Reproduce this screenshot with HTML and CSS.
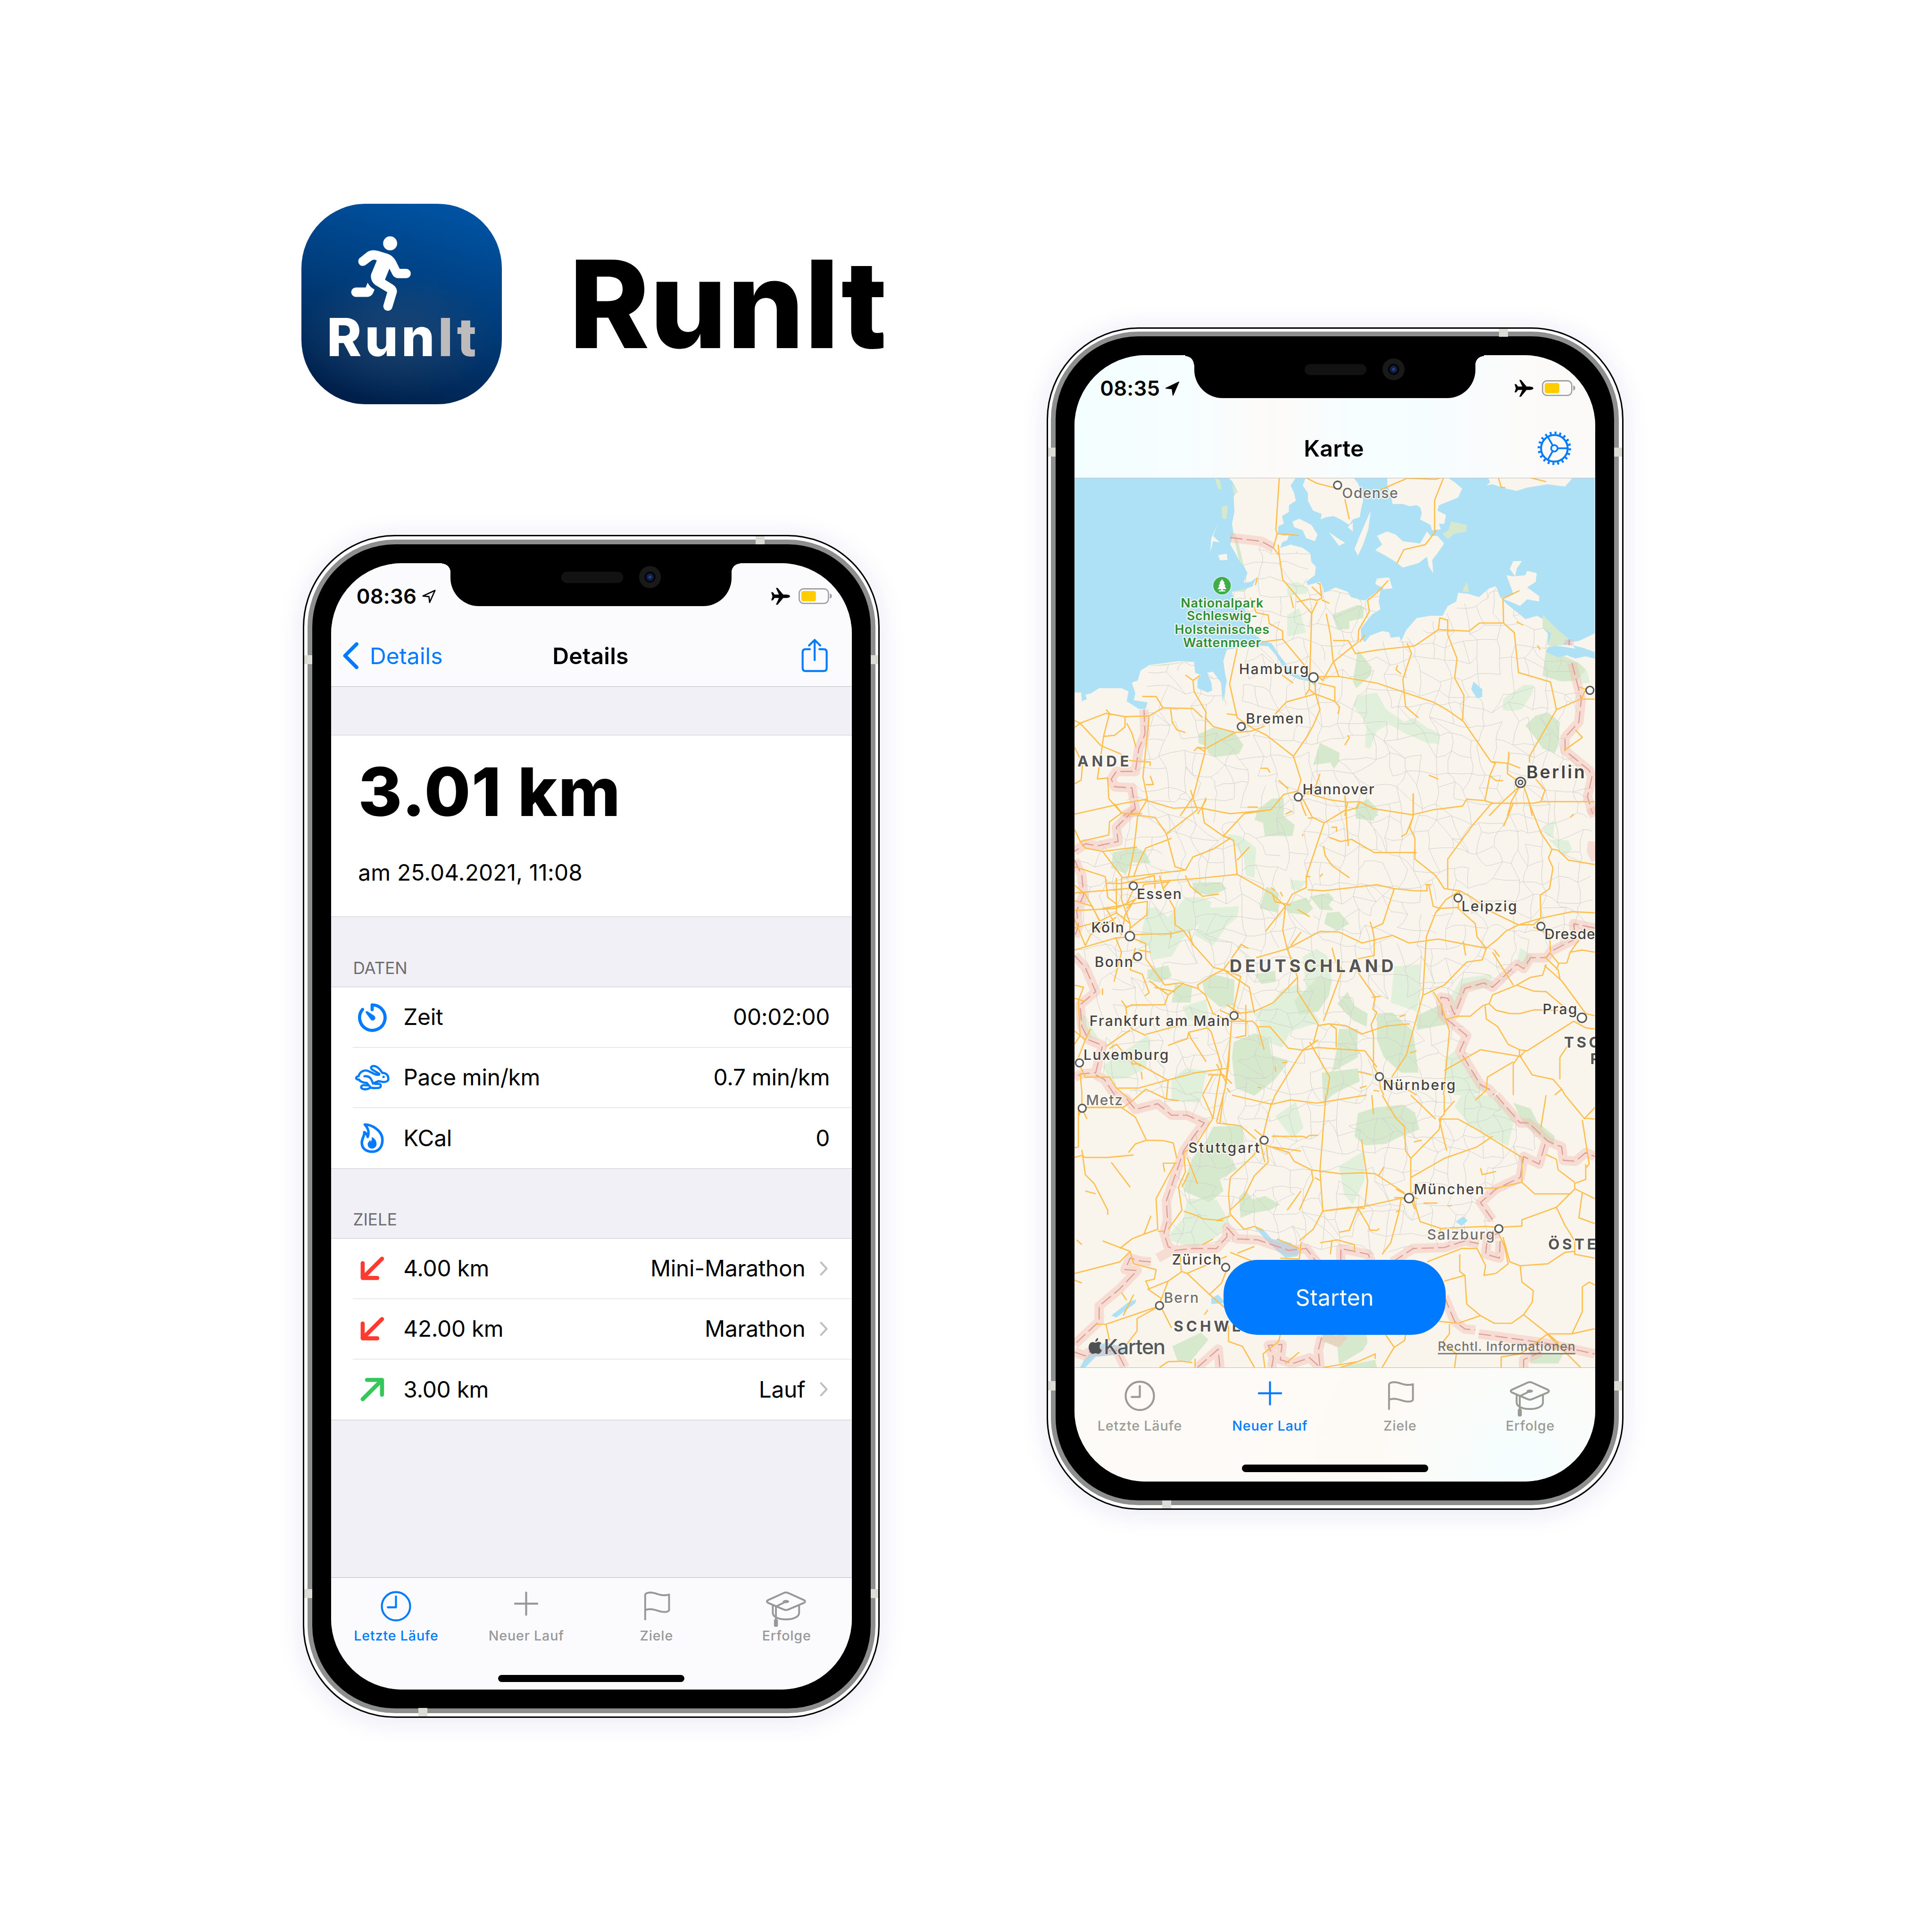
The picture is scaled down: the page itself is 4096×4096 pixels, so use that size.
FILE: index.html
```html
<!DOCTYPE html>
<html lang="de">
<head>
<meta charset="utf-8">
<title>RunIt</title>
<link rel="stylesheet" href="styles.css">
</head>
<body>
<svg width="0" height="0" class="defs">
  <symbol id="i-clock" viewBox="0 0 100 90"><g class="ln"><circle cx="50" cy="40" r="33"/><path d="M50 17V42.500H31"/></g></symbol>
  <symbol id="i-plus" viewBox="0 0 100 90"><path class="ln" d="M50 8V60M24 34H76"/></symbol>
  <symbol id="i-flag" viewBox="0 0 100 90"><path class="ln3" transform="translate(-19 -20) scale(.33333)" d="M129 272V98Q135 85 165 84C205 86 225 103 262 103Q285 102 296 98V208Q290 220 262 220C225 220 205 201 165 200Q140 201 130 207"/></symbol>
  <symbol id="i-hat" viewBox="0 0 100 90"><g transform="translate(-322 -20) scale(.33333)"><path class="ln3" d="M1095 88Q1112 80 1130 88L1240 138Q1252 147 1240 155L1130 202Q1112 211 1095 202L985 155Q972 147 985 138ZM1020 172V225C1020 255 1060 272 1112 272S1204 255 1204 225V172M1112 147L1042 182V275"/><ellipse class="fl" cx="1112" cy="147" rx="22" ry="11"/><rect class="fl" x="1028" y="270" width="28" height="54" rx="11"/></g></symbol>
  <symbol id="i-plane" viewBox="0 0 44 40"><path class="fl" d="M44 20Q43 23.500 36 24H28L15 39.500H11L18 24H8L4 29.500H0L3 20L0 10.500H4L8 16H18L11 .5H15L28 16H36Q43 16.500 44 20Z"/></symbol>
  <symbol id="i-battery" viewBox="0 0 78 38"><rect x="1.500" y="1.500" width="68" height="34" rx="10" fill="none" stroke="#9b9b9d" stroke-width="2.800"/><rect x="6.500" y="6.500" width="34" height="24" rx="5" fill="#ffcc00"/><path d="M73 12.500Q77.500 14 77.500 18.500T73 24.500Z" fill="#9b9b9d"/></symbol>
  <symbol id="i-down" viewBox="0 0 90 90"><path class="ln9" d="M68 22.500L23 67.500M23 33V67.500H57"/></symbol>
  <symbol id="i-up" viewBox="0 0 90 90"><path class="ln9" d="M23 67.500L68 22.500M33 22.500H68V57"/></symbol>
  <symbol id="i-next" viewBox="0 0 20 36"><path class="ln" d="M3 4L16 18L3 32"/></symbol>
</svg>

<main class="board">
  <section class="col">
    <header class="brand">
      <svg class="app-icon" viewBox="0 0 466 466">
        <g transform="translate(78 46) scale(.33333)" fill="#fff">
          <circle cx="386" cy="138.500" r="49"/>
          <path d="M303 192L370 212Q405 225 425 260L453 317H498A32.500 32.500 0 0 1 498 382H440Q413 380 401 355L381 315L350 393L408 429Q437 450 433 482L401 587Q393 610 369 610Q338 606 338 575L366 480L283 430Q245 400 253 355L293 258Q270 245 252 262L215 290Q200 300 180 294Q155 275 168 247Q172 241 180 236L222 202Q255 178 303 192Z"/>
          <path d="M229 413Q245 445 277 461L267 486Q254 511 228 513H147A33 33 0 0 1 147 447H215Z"/>
        </g>
        <svg width="404" height="466"><text x="59" y="355" class="icon-name" textLength="350">Run<tspan fill="#bdbbbc">It</tspan></text></svg>
      </svg>
      <h1>RunIt</h1>
    </header>

    <div class="phone">
      <i class="band tr"></i><i class="band lt"></i><i class="band rt"></i><i class="band lb"></i><i class="band rb"></i><i class="band bl"></i>
      <div class="rim"><div class="screen">
        <div class="bars">
          <div class="status"><span class="time">08:36</span>
            <svg class="loc" viewBox="0 0 34 34"><path fill="none" stroke="#000" stroke-width="3" stroke-linejoin="round" d="M31 3L3 16L17 17.500L18.500 31Z"/></svg>
            <svg class="plane"><use href="#i-plane"/></svg><svg class="battery"><use href="#i-battery"/></svg></div>
          <div class="nav">
            <a class="back"><svg viewBox="0 0 38 64"><path fill="none" stroke="currentColor" stroke-width="8.500" stroke-linecap="round" stroke-linejoin="round" d="M33 5L6 32L33 59"/></svg>Details</a>
            <b>Details</b>
            <svg class="share" viewBox="0 0 64 80"><path class="ln" d="M21 24.500H11Q4 24.500 4 31.500V68Q4 75.500 11 75.500H53Q60 75.500 60 68V31.500Q60 24.500 53 24.500H43M32 50V4M19 16L32 3L45 16"/></svg>
          </div>
        </div>
        <div class="content">
          <div class="hero"><strong>3.01 km</strong><p>am 25.04.2021, 11:08</p></div>
          <h2>DATEN</h2>
          <ul>
            <li><svg class="blue" viewBox="66 71 270 270"><path fill="none" stroke="currentColor" stroke-width="22" stroke-linecap="round" stroke-linejoin="round" d="M201 155V122A89 89 0 1 1 134 154"/><path class="fl" d="M157 178Q152 163 168 167L214 196Q229 208 220 223Q206 238 192 226Z"/></svg><span>Zeit</span><em>00:02:00</em></li>
            <li><svg class="blue" viewBox="66 493 270 270"><path fill="none" stroke="currentColor" stroke-width="15" stroke-linecap="round" stroke-linejoin="round" d="M272 597C255 570 232 547 208 549C190 552 190 565 200 573L250 603Q255 612 238 611C215 608 190 588 165 581C135 577 112 595 107 620C92 622 85 632 92 639C98 646 105 643 108 643C118 660 145 668 163 667L192 701C215 706 235 703 250 702C266 696 265 676 250 674H222L243 655C260 655 270 662 285 661C305 660 315 652 314 635C313 610 295 598 272 597M147 621C183 616 195 635 207 672L232 660M165 685C140 680 125 683 124 697C126 714 160 714 175 708Q186 703 190 698"/><circle class="fl" cx="281" cy="625" r="8.500"/></svg><span>Pace min/km</span><em>0.7 min/km</em></li>
            <li><svg class="blue" viewBox="66 917 270 270"><path fill="none" stroke="currentColor" stroke-width="18" stroke-linejoin="round" d="M150 957C200 957 273 1000 273 1065C273 1120 240 1147 200 1147C155 1147 129 1120 129 1085C129 1050 148 1040 147 1010Q165 1022 170 1043C182 1010 175 985 150 957Z"/><path class="fl" d="M185 1065Q192 1070 193 1078Q200 1065 199 1044C220 1055 232 1070 232 1092C232 1112 218 1125 201 1125C183 1125 170 1112 170 1095C170 1082 180 1078 185 1065Z"/></svg><span>KCal</span><em>0</em></li>
          </ul>
          <h2>ZIELE</h2>
          <ul class="goals">
            <li><svg class="red"><use href="#i-down"/></svg><span>4.00 km</span><em>Mini-Marathon</em><svg class="next"><use href="#i-next"/></svg></li>
            <li><svg class="red"><use href="#i-down"/></svg><span>42.00 km</span><em>Marathon</em><svg class="next"><use href="#i-next"/></svg></li>
            <li><svg class="green"><use href="#i-up"/></svg><span>3.00 km</span><em>Lauf</em><svg class="next"><use href="#i-next"/></svg></li>
          </ul>
        </div>
        <div class="tabs">
          <nav><a class="on"><svg><use href="#i-clock"/></svg>Letzte Läufe</a><a><svg><use href="#i-plus"/></svg>Neuer Lauf</a><a><svg><use href="#i-flag"/></svg>Ziele</a><a><svg><use href="#i-hat"/></svg>Erfolge</a></nav>
          <div class="home"></div>
        </div>
        <div class="notch"><i class="speaker"></i><i class="camera"></i></div>
      </div></div>
    </div>
  </section>

  <section class="col second">
    <div class="phone">
      <i class="band tr"></i><i class="band lt"></i><i class="band rt"></i><i class="band lb"></i><i class="band rb"></i><i class="band bl"></i>
      <div class="rim"><div class="screen map-screen">
        <div class="bars">
          <div class="status"><span class="time">08:35</span>
            <svg class="loc" viewBox="0 0 34 34"><path stroke="#000" stroke-width="2" stroke-linejoin="round" d="M32 2L2 16.500L16.500 18L18.500 33Z"/></svg>
            <svg class="plane"><use href="#i-plane"/></svg><svg class="battery"><use href="#i-battery"/></svg></div>
          <div class="nav"><span></span><b>Karte</b>
            <svg class="gear" viewBox="-40 -40 80 80"><circle r="36" fill="none" stroke="currentColor" stroke-width="6" stroke-dasharray="4.600 6.710"/><circle r="31" fill="none" stroke="currentColor" stroke-width="4.500"/><circle r="7.500" fill="none" stroke="currentColor" stroke-width="4"/><path fill="none" stroke="currentColor" stroke-width="4" d="M8 0H30M-4 -7L-15.500 -27M-4 7L-15.500 27"/></svg></div>
        </div>
        <div class="content map">
<svg viewBox="2503 1114 1212 2070" preserveAspectRatio="none">
<clipPath id="de"><path d="M2906 1253L2966 1276 3055 1289 3042 1355 3110 1370 3179 1398 3211 1345 3215 1416 3179 1495 3263 1493 3360 1434 3484 1365 3557 1330 3585 1391 3605 1475 3661 1544 3683 1628 3645 1733 3709 1809V2156L3613 2215 3476 2299 3388 2324 3416 2411 3448 2526 3561 2615 3605 2657 3549 2693 3541 2742 3448 2800 3491 2858 3492 2930 3444 2896 3292 2907 3067 2938 2930 2887 2721 2903 2717 2796 2757 2680 2805 2615 2697 2569 2572 2513 2552 2309 2503 2225V2003L2600 1926 2637 1835 2665 1653 2677 1549 2781 1541 2858 1585 2882 1508 2870 1378Z"/></clipPath>

<g transform="translate(2480 1100) scale(.80357 .5102)">
<path class="g2" d="M645 510L675 500 705 530 700 555 645 560ZM645 650L680 620 690 680 700 730 645 750ZM850 1020L905 1005 930 1080 985 1140 1010 1120 1050 1165 1085 1190V1240L1050 1235 985 1190 940 1150 905 1180 885 1260 870 1255 875 1150 835 1060ZM1270 1035L1330 970H1360L1355 1010 1325 1080 1300 1090 1270 1085ZM1490 880L1515 910 1522 960 1495 965Z"/>
<path class="g1" d="M775 650L850 605 868 615 865 665 825 680V715L790 717ZM850 810L890 890 888 925 845 985 835 955ZM388 1195L430 1165 490 1180 518 1245 505 1285 435 1300 415 1280 410 1250 388 1235ZM740 1235L797 1280 795 1320 780 1355 770 1325 720 1335ZM1335 1155L1365 1110 1400 1095 1435 1140 1430 1250 1420 1282 1385 1260 1365 1215ZM1395 805L1450 840 1490 870 1510 900 1485 950 1440 955 1385 930ZM555 1545L600 1490 635 1485V1568H555ZM845 1515L880 1490 910 1568H845Z"/>
</g>
<g transform="translate(2480 1850) scale(.80357 .5102)">
<path class="g2" d="M470 180L510 190 555 245 550 380 525 370 520 290ZM240 520L265 515 300 560 350 470 400 470 425 490 420 540 370 620 340 660 310 740 255 755 240 690 215 680ZM400 520L505 510 500 560 470 600 430 690 375 640 400 560ZM655 390L700 395 680 440 655 430ZM690 740L730 705 760 735 775 850 700 890ZM630 890L675 865 740 1040 655 1080 630 1155 570 1120 565 1030 548 1005 600 950ZM955 785L1030 775V900L1020 990 945 950ZM340 970L410 935 420 1040 360 1030ZM110 1240L240 1100 250 1120 235 1250 180 1295 130 1300ZM310 1300L350 1250 410 1260 395 1400 310 1390ZM1100 1210L1130 1170 1225 1350 1180 1372H1130L1110 1330ZM1115 930L1150 840 1235 820 1245 880 1165 890 1130 990ZM1320 700L1360 740 1340 790 1310 770ZM1385 155L1420 115 1415 200 1400 190ZM1402 205L1460 210 1470 250 1450 280ZM40 1000L60 1010 100 1120 60 1110Z"/>
<path class="g1" d="M565 60L600 30 630 20 635 100 667 140 660 190H580L575 130 550 115ZM843 55L880 25 910 70 895 120 843 110ZM140 265L205 240 235 265 250 315 195 310 178 362 135 335ZM370 403L450 400 470 430 430 460 375 450ZM585 420L620 450 618 540 565 520ZM710 465L765 450 780 475 765 505 780 530 740 525ZM760 540L795 535 825 590 790 622 752 590ZM240 800L300 780 310 830 275 860 240 840ZM550 820L610 805 612 855 570 865ZM400 860L430 820 492 845 490 960 450 970 405 910ZM320 865L370 875 365 950 310 950ZM700 890L735 830 775 845 765 920 735 990 680 1005 665 940ZM790 955L820 900 840 965 878 1000 875 1060 835 1030ZM795 1070H850L848 1140 850 1200 775 1265 790 1150ZM905 1000L950 995 1010 1080 1025 1270H975L925 1200 905 1120ZM1020 1010L1095 955 1105 1050 1020 1075ZM490 1130L550 1090 590 1110 600 1190 650 1215 610 1300 550 1375 495 1340 485 1200ZM745 1270L850 1250 855 1310 800 1350 775 1372 750 1410ZM640 500L700 470 720 520 700 550 650 540Z"/>
</g>
<g transform="translate(2480 2550) scale(.80357 .44643)">
<path class="g2" d="M355 540L440 545 465 620 475 660 440 740 380 800 310 760 305 720 345 640ZM795 370L865 295 870 440 835 570 810 520ZM610 110L670 35 692 170 660 225 645 190ZM1150 0H1245L1305 110 1285 265 1180 170 1130 60ZM310 0H395L390 40 310 30Z"/>
<path class="g1" d="M430 165L515 160 520 240 480 330 500 385 450 440 460 500 420 560 345 500 350 430 370 330 410 240ZM850 95L900 65 980 50 1015 90 1028 180 975 215 930 255 870 262 840 215ZM505 530L525 497 545 545 580 525 625 570 595 600 545 615 510 640ZM1300 40L1350 70 1370 140 1420 215 1415 265 1330 150ZM312 1310L395 1238 417 1275 365 1388 327 1385ZM745 1250L875 1248 878 1290 865 1330 795 1405 790 1310 745 1285ZM1350 1340L1445 1350 1430 1400H1350ZM790 1420L900 1380 905 1420Z"/>
</g>

<path id="minor" class="minor" clip-path="url(#de)"/>

<g transform="translate(2480 1100) scale(.80357 .5102)">
<path class="water" d="M29 20H470L485 40 500 85 490 110 492 180 485 235 490 280 480 330 495 370 505 400 520 430 530 460 518 505 540 500 555 480 545 520 520 535 485 545 490 575 520 600 525 640 530 690 550 740 575 770 600 780 620 830 640 870 655 905 690 935 710 940 730 960 728 980 712 955 680 945 650 925 630 880 610 830 590 795 560 790 510 800 470 810 460 860 465 920 470 950 458 1050 453 960 430 910 413 915 425 960 428 995 415 1005 385 985V945L395 925 378 915 375 865 330 862 245 880 220 905 212 950 195 960 205 1010 200 1040 240 1050 235 1080 215 1080 180 1045 185 1000 165 985 100 985 75 1010 60 1015 65 1035 50 1045 48 1005H29ZM672 20L655 60 665 95 670 130 650 150V180L630 200 635 235 620 245 618 275 635 290 650 285 645 310 630 320 625 345 655 330 690 345 712 370 715 410 728 430 725 470 700 500 705 515 740 500 750 530 752 550 785 525 820 545 830 570 870 585 905 545 925 530 900 510 905 485 940 480 950 530 915 535 910 590 915 625 890 650 870 690 858 715 860 760 870 775 885 745 920 725 940 730 945 755 970 750 975 770 990 720 1020 665 1060 655 1095 655 1110 610 1135 590 1140 550 1170 555 1200 570 1230 530 1250 520 1262 570 1280 600 1300 625 1320 650 1335 670 1370 655 1395 680 1385 710 1400 735V790L1440 795 1480 805 1465 775 1490 770 1536 735V20ZM1400 800L1430 790 1460 785 1500 800 1536 820V850L1510 840 1480 850 1455 835 1430 845 1395 820ZM1185 955L1210 990V1025L1195 1032 1178 990Z"/>
<path class="land" d="M700 20L690 60 705 95V130L720 175 745 190 742 215 757 205 780 200 800 215 825 240 835 215 855 205 860 160 865 130 860 90 850 50 835 20ZM935 20V60L945 100 950 145 980 145 1000 155 1020 150 1030 160 1035 185 1030 215 1060 240 1065 265 1090 260 1085 235 1100 235 1105 195 1080 175 1085 150 1140 115 1152 75 1130 45 1105 20ZM1225 20L1233 45 1222 60 1240 55 1280 75 1310 85 1340 70 1400 55 1450 65 1475 20ZM905 290L935 270 960 285 980 315 1030 325 1050 270 1060 290 1080 290 1100 325 1080 370 1065 400 1068 460 1055 430 1050 385 1025 415 980 435 960 410 935 385 900 355 920 330ZM887 175L880 260 865 330 850 380 840 350 855 290ZM660 225L680 212 715 240 733 285 725 315 700 300 690 265 665 250ZM765 272L800 310 813 322 795 335ZM820 250L835 230V270ZM1280 470L1300 475 1335 470 1340 450 1368 460 1365 500 1340 525 1375 565V590L1340 580 1320 610 1290 590 1265 575 1300 555 1290 510ZM1290 440L1300 405 1325 405 1310 440 1305 475ZM445 230L430 290 450 320 430 315 422 365 425 300ZM445 378L470 372 472 400 450 402Z"/>
<path class="g1" d="M1095 280L1112 265 1120 225 1165 240V270L1130 280 1110 305ZM455 155L473 155 468 215 457 210ZM485 55L503 90 490 100ZM435 27L450 35 455 80 445 75ZM1152 545L1165 500 1172 545ZM1385 650L1430 720 1460 760 1440 790 1400 790 1410 735 1385 710ZM240 885L290 875 375 862 290 882ZM485 260L500 300 520 430 505 400ZM485 545L530 530 520 545Z"/>
<path class="glow" d="M480 298L570 315 605 345M1462 763V790M230 1083L233 1195 215 1260 205 1365H150L135 1400 145 1435 195 1440 205 1535 170 1568M1470 870L1497 1035 1490 1140 1450 1210V1270L1520 1360 1528 1390 1515 1480 1530 1560"/>
<path class="dash" d="M480 298L570 315 605 345M1462 763V790M230 1083L233 1195 215 1260 205 1365H150L135 1400 145 1435 195 1440 205 1535 170 1568M1470 870L1497 1035 1490 1140 1450 1210V1270L1520 1360 1528 1390 1515 1480 1530 1560"/>
<path class="road" d="M622 25L612 262 616 280 605 345 622 380 632 490 716 645 732 590M619 330L622 380M616 280L678 288M700 25L730 50 800 78M812 122L825 215M915 80L993 27 1075 32 1090 25M1098 25L1072 128V262L1076 267 1045 330 983 353 963 415M1257 25L1265 68 1277 70M1350 25L1395 43M716 645L709 990 725 1012M672 592L712 578 732 584 745 575 740 510 732 506M745 582L767 598M716 522L745 565M558 480L553 515M538 573L555 640 590 652 593 690 632 725V762L570 775M632 762L695 880M655 565L663 620M758 645L770 740 778 860 795 932M938 493L905 550 878 585 883 635 852 720 850 775 778 866 748 950 735 932H795L905 962 1070 1050 1112 1088 1155 1136 1200 1240 1235 1320 1285 1328 1320 1350M870 742L855 775M778 768H822L843 828 905 811 1015 792 1083 718 1172 725 1202 688H1272M1083 718L1087 664 1110 675V740L1137 850 1130 938 1157 1018 1153 1136M1318 540L1270 577 1272 688 1303 732 1315 914 1408 957 1425 1083 1347 1296V1325M992 780L1005 825 980 945 988 1070 1025 1120M1310 682L1328 697M1370 790L1378 810M965 880L960 900 975 920M725 1012L643 1048 610 1103M709 990L697 1018M725 950L727 1010 740 1083 722 1150 705 1200 663 1296 685 1405 675 1455 690 1530 700 1568M727 1012L783 1045 797 1073 792 1103M735 962L783 980V1045M630 925L662 962M500 805L478 965 500 1120 547 1170 585 1200 663 1296M470 1102L498 1108M350 925L372 950 392 928M372 950L375 1000 410 1095 408 1120 430 1160 495 1187 540 1182 580 1158M408 1120L407 1275 373 1480 335 1568M495 1187L410 1260 385 1255 375 1272M407 1275L385 1255M225 1023H265L285 1075 372 1078 400 1120M285 1075L245 1112 175 1115 120 1100 45 1145 29 1133M307 1080L312 1140 325 1175 350 1188M120 1083L130 1100 113 1205 95 1400 125 1395 128 1490M175 1115V1162L145 1200 115 1205M45 1145L105 1247 165 1287M180 1145L195 1190 207 1255M45 1145L29 1165M29 1255L52 1330 48 1405 29 1422M245 1112L227 1390 240 1490 230 1494 165 1512 29 1560M185 1315L235 1322H248V1340M248 1385L257 1425H235M128 1490L165 1555 225 1558M230 1494L315 1533 380 1528 480 1558 598 1540 635 1470 675 1455M365 1450L375 1500M410 1495L385 1560M690 1460L770 1495 820 1505 855 1503 895 1535 1007 1563 1068 1540 1153 1523 1165 1492 1218 1498 1240 1510H1360L1380 1503H1536M740 1375L728 1430 690 1480M568 1351H588L595 1370M620 1405L648 1445M530 1528H560M1055 1382L1083 1400M1010 1465V1568M855 1503L848 1530 815 1545M820 1505L812 1568M820 1200L825 1210 812 1245M1235 1320L1248 1328 1232 1385 1218 1498M1285 1328L1287 1275M1283 1330V1375L1310 1405M1320 1430L1295 1500 1283 1568M1320 1430L1265 1510 1230 1568M1330 1430L1345 1500 1355 1568M1232 1385L1250 1407H1270M1365 1400L1392 1450 1380 1503M1425 1083L1495 1035H1536M1490 980L1510 990 1497 1035M1480 1175L1500 1210 1447 1270"/>
</g>

<g transform="translate(2480 1850) scale(.80357 .5102)">
<path class="glow" d="M205 65L150 150 155 215 95 235 60 225 29 260M29 300L50 370 55 460 35 530 40 600 29 650M29 735L60 790 90 900 45 960 50 1060 70 1120 110 1145 90 1270 50 1275 29 1290M90 1280L115 1300 145 1372M1536 610L1475 590 1480 660 1410 715 1395 745 1350 745 1330 795 1310 775 1240 880 1215 860 1160 885 1130 1005 1110 930 1090 925 1095 1010 1165 1100 1145 1170 1205 1325 1230 1345 1245 1372M1525 60L1536 100M1530 215L1527 260 1540 300"/>
<path class="dash" d="M205 65L150 150 155 215 95 235 60 225 29 260M29 300L50 370 55 460 35 530 40 600 29 650M29 735L60 790 90 900 45 960 50 1060 70 1120 110 1145 90 1270 50 1275 29 1290M90 1280L115 1300 145 1372M1536 610L1475 590 1480 660 1410 715 1395 745 1350 745 1330 795 1310 775 1240 880 1215 860 1160 885 1130 1005 1110 930 1090 925 1095 1010 1165 1100 1145 1170 1205 1325 1230 1345 1245 1372"/>
<path class="road" d="M145 42L165 85 130 125 128 185 45 215 29 160M45 215L60 245 110 260M520 88L598 70M165 85L262 105 295 180 320 330 350 345 372 285 430 250 480 200 460 190M520 88L460 190M375 30L385 70 295 180M410 15L398 60 405 130 460 190 490 210 500 365 602 455 640 510 582 625M535 240L500 300M240 22L212 95 200 260 185 375M110 260L210 240M110 260L168 380M310 200L235 245 215 310 200 375M168 380L350 345M120 405L165 407 260 370 262 430M29 450L190 428M29 330L118 375 125 470 150 500M190 405L375 385 500 365M350 370L365 420 400 465 447 455M150 380V500L150 540 190 590M165 380V480L190 590M200 430L180 500M240 488L110 520M29 530L150 520 215 470 230 410 300 400M29 415L60 455 110 600M29 485L80 510 100 575M275 370L285 430 305 395M190 590L188 650 235 680 235 750 290 870M190 640L310 635 345 622 375 690 432 790 460 800M345 622L320 595 318 520 285 430M360 622L372 690M308 625V655M188 650L148 655 29 710M148 655L165 720 143 855M120 520L135 560 165 640 175 550 195 500M205 480L180 520M240 488L238 550 190 610M29 610L100 580 150 540M60 690L75 640 150 560M29 570L60 690M205 700L190 800 225 820 245 905 232 920M215 710L250 720M290 870L335 860 385 885 408 915 430 1000 480 1035M245 850L300 915 290 960H195L175 975M300 915L345 860M260 880L320 900M165 940L178 970 180 1030 195 1070 235 1100M460 800L535 880 550 1000M460 800L428 825 385 870 388 885M460 800L512 685 533 703M555 745L645 705 740 625 795 628 862 678 950 643 998 678 1083 660 1222 702 1210 755 1165 765 1100 870 1040 915M645 705L675 835V900L735 1050 720 1140M675 835L605 950 550 990 500 1000M460 800L510 830 485 1015 480 1120 465 1340 440 1495M480 1035L545 1035 560 1060H595L648 1158 690 1167 732 1155 870 1170M450 985L530 1040M495 1110L525 1100V960M470 960L510 1000M765 1047L735 1055M690 1167L735 1120M765 1047L815 1055 862 1093 930 1057 1000 1047M770 1050L787 1070V1155M775 700L785 760 805 800 750 1035M845 800L900 925 893 980 905 995 888 1050 895 1100V1240L912 1290M890 925L915 922M870 1170L905 1245M710 1130L768 1290 760 1372M690 1167L610 1372M560 1060L578 1165M470 1340L480 1360M895 1350L912 1355M912 1290L915 1340 925 1372M912 1290L985 1340 1020 1372M948 1290L990 1190 1038 915 1048 650 1075 540 1088 520 1145 515M850 1265L890 1280M855 1340L875 1330M1068 900L1090 955 1115 1080 1105 1250 1098 1372M1190 1395L1222 1350 1225 1290 1300 1220M1145 440L1105 480 1075 540M1055 410L1068 510 1088 520M1045 412H1063M705 435L750 440 905 412 955 430 1015 440H1050V412M640 510L660 455 700 425V375H712M675 525L710 558M740 375L748 362M598 425L610 440M625 445L632 465M602 455L610 490 655 505M700 400V375L752 130 718 105 690 20M705 108H718M752 130L815 70 812 0M640 90L660 75M773 150H788V170M690 180V190M765 195L800 215 832 205 897 265H1020M1010 0V100L1000 150 1015 200V295L1075 370 1100 430 1145 440 1140 520 1190 590 1195 650 1222 702M1010 100L990 180 975 193M750 235L755 280 775 325 825 380M640 510L632 620 645 705M655 690L685 628M885 580L893 620 897 660V735L850 750M955 430L922 590 890 612M815 70L822 235M1110 430V295L1180 145 1240 35M1300 40L1272 145M1345 35L1380 175 1412 250 1402 290 1415 335 1405 430 1378 460 1380 565 1315 595 1240 538 1180 470 1145 440M1412 250L1430 255 1460 300 1536 320M1380 565L1470 535 1536 540M1315 595H1358L1380 565M1358 605L1405 640 1408 720M1315 595L1278 625 1255 660 1222 702M1465 720L1500 710 1536 720M1390 740L1430 800 1435 840M1425 800L1432 770H1455L1465 720 1490 665M1405 720L1430 770M1390 780L1440 850 1510 1000 1536 1010M1395 775L1385 825 1350 835 1310 870 1240 915 1230 955 1250 985 1290 1000 1320 1000 1360 983 1430 985M1310 870L1360 898 1395 900 1470 1000M1230 955L1218 960 1222 1025 1255 1060 1285 1140 1318 1165 1340 1170 1475 1035 1510 1065 1536 1070M1300 870L1240 720M1110 1025L1135 1012H1175L1215 960M1318 1165V1190L1300 1230V1372M1335 1170L1320 1195M1325 1197L1205 1165 1100 1260M1318 1190L1355 1280 1415 1300 1440 1345 1450 1372M1435 1300V1200L1465 1130M1440 1345L1420 1372M1155 670L1162 735M1245 710L1260 740M1465 105L1475 90M29 930L60 945M29 870L55 880 40 940 45 1100 29 1140M110 885V915M40 1200L60 1120 29 1080M75 1070L60 1120M45 1240L60 1290 130 1290 150 1340 195 1400 170 1428H50M45 1270L50 1360V1428M150 1340H215L295 1305 380 1270 470 1250M195 1210V1230L215 1230 300 1305 295 1390 330 1397M222 1265L225 1300M480 1110L475 1240 465 1340M415 1065L425 1085 455 1240 440 1372M415 1280H460L485 1320M295 1390L235 1345 195 1400M300 1145L355 1115 360 1085 415 1065M360 1085L365 1110 410 1220M430 1280L400 1370M440 1230L470 1320M130 1160L150 1140 175 1185 220 1240M120 1150L190 1075M235 1095L330 1055M610 1240L612 1265M630 1225L645 1222M1000 1180L1020 1170M970 1015L988 1005M560 1335L570 1340"/>
</g>

<g transform="translate(2480 2550) scale(.80357 .44643)">
<path class="water" d="M552 690L575 700 600 750 655 770 680 810 675 840 640 848 615 810 580 750ZM1133 660L1155 632 1168 655 1150 682ZM55 1385L90 1310 120 1290 180 1320 175 1350 90 1365 60 1420H45ZM135 1150L185 1080 207 1065 205 1085 150 1160ZM425 1060L445 1040 460 1070V1085L425 1090Z"/>
<path class="glow" d="M140 0L180 20 205 75 270 45 310 105H355L405 145 380 200 345 290 320 420 295 550 298 650 288 720 300 790 320 810 370 800 440 800 470 740V690L500 750 560 755 650 810 700 800 730 870M310 810L270 850M250 870L220 865 190 850 175 910 210 915 160 1010 100 1100V1180L29 1300M800 870V800L880 830 890 880M950 870L1010 800 1100 795 1160 760 1200 775M1258 720L1225 740 1220 830 1260 850 1262 760M1240 650L1205 560 1250 490 1320 430 1330 320 1375 360 1395 240M1250 0L1320 145H1345L1400 240 1440 270 1445 340 1480 345 1510 300 1536 320M1100 1050L1130 1180 1160 1220 1190 1225M1200 1245L1400 1295 1536 1350M1330 1420V1380L1380 1340M385 1420L445 1325 450 1420M600 1420L605 1370 590 1305 630 1300 625 1380 660 1400 710 1370 740 1420 735 1330 745 1260M750 1250L790 1290 810 1250M29 1340L60 1360 70 1340 150 1330 175 1420"/>
<path class="dash" d="M180 20L205 75 270 45 310 105H355L405 145 380 200 345 290 320 420 295 550 298 650 288 720 300 790 320 810 370 800 440 800 470 740V690L500 750 560 755 650 810 700 800 730 870M250 870L220 865 190 850 175 910 210 915 160 1010 100 1100V1180L29 1300M800 870V800L880 830 890 880M950 870L1010 800 1100 795 1160 760 1200 775M1258 720L1225 740 1220 830 1260 850 1262 760M1240 650L1205 560 1250 490 1320 430 1330 320 1375 360 1395 240M1250 0L1320 145H1345L1400 240 1440 270 1445 340 1480 345 1510 300 1536 320M1100 1050L1130 1180 1160 1220 1190 1225M1200 1245L1400 1295 1536 1350M1330 1420V1380L1380 1340M385 1420L445 1325 450 1420M600 1420L605 1370 590 1305 630 1300 625 1380 660 1400 710 1370 740 1420 735 1330 745 1260M29 1340L60 1360 70 1340 150 1330 175 1420"/>
<path class="road" d="M40 60V270L29 275M50 70L65 125M50 70L40 110M29 325L50 315 60 325 125 325 200 312M50 285L60 415 85 460 125 600V625M50 65H165L205 115 237 235 285 237 315 250 325 330M237 235L205 255 185 300M135 350L190 480M60 500L90 515M440 0L430 120 380 260 345 300 350 400 330 480 340 600 300 700M460 0L450 150M400 0L430 120M485 0L600 48 655 25 730 42 875 0M440 145L510 160 555 230M355 325L380 440 385 465M360 405L340 480M285 355H325M285 355L290 400M320 355L265 540 270 700 230 725 195 750 160 800M250 630L230 725M560 260L550 310 480 430 475 520 480 620 520 700M585 270L590 350 550 420 520 530 480 600M565 230L580 350M580 260L650 300 665 345 715 390 800 410 860 405 900 410 985 510M600 270L685 292M600 215H690L700 222 710 210 735 210M550 180L575 215M715 390L720 440 680 600M600 40L590 100 575 215M610 0L600 48M740 390L757 0M725 430L740 445M740 390L748 605 720 700 680 760M748 605L825 585 870 590M748 605L870 580 970 540 1003 540M870 580L878 450 860 230M850 590L825 705 795 715M850 590L880 680 885 705H905L912 695M890 0L895 100M920 0L960 120 985 165 988 290 1003 330V510M1003 330L1085 180 1090 125H1140L1195 180 1325 325V455L1250 485H1215M1020 490L1003 520M1003 430L1100 330 1195 270 1240 215M1003 0L1075 125M1100 0V100L1085 125 1107 290M1130 30L1100 90M1205 380L1210 415 1250 398M925 375L910 420M1012 245L1035 235M960 490L1000 530 1025 540M1010 540L1030 660 1090 695 1220 685 1258 690 1325 683V650L1425 585 1478 490V460L1510 440V360M975 540L970 600 945 770 920 830M970 600L960 610M1003 540L1015 595M955 535H985M1040 563H1080M1110 577H1122M1325 455L1362 515H1465L1478 490M1425 585L1450 680 1478 760M1090 695L1080 750M1255 710L1275 790 1285 880 1250 930 1215 940 1220 890 1195 800H1150L1050 870M1270 740L1290 870 1320 890 1400 880 1450 820 1478 815M1320 890L1325 975 1358 1020 1355 1080 1330 1145 1295 1190H1245L1205 1150M1330 1145L1400 1245H1470L1500 1130 1500 1000 1520 975 1536 990M1145 830V920L1160 940 1165 1090 1205 1150 1140 1190 1085 1180M1470 1245L1536 1218M1400 1245L1430 1290 1420 1330M1265 1365V1420M1265 1365L1320 1350 1400 1245M1400 1250L1495 1420M1100 970L1160 940M1480 490L1536 540M1500 510L1490 640 1536 670M1395 310L1425 335 1430 390 1478 455M1395 0L1380 170M1450 0L1505 120 1536 125M1500 130L1520 360 1510 380M1505 125L1536 65M1478 750V830L1536 850M29 930L160 870 190 815 200 880 265 910 260 960 235 970 245 1010 300 970 340 920 355 930 470 840M240 1010L280 1060 275 1090M300 970L275 1090 310 1215M275 1100L210 1165V1230L180 1300M90 1195H120L275 1100M120 1195L130 1280M165 1030L180 1070M200 1040L170 1150M355 930L420 1040 465 1110M455 980L420 1040M470 910L455 980M335 830L338 920M480 820L550 870M500 825L550 790M415 1120L405 1145M475 1200V1285L515 1310 550 1420M275 1420L300 1390 340 1388 370 1395M378 1375V1420M625 1250L620 1285 575 1350 580 1420M680 1340L640 1400M750 1420L850 1390 900 1350V1375M850 1390L800 1420M930 1250L955 1315 920 1420M955 1315L985 1280 990 1230M1115 1195V1245L1095 1290 1135 1350 1130 1420M740 770L790 755 840 780V810M775 755L770 830M625 850L680 855M680 855L685 770M550 685L520 700M550 685L575 705M645 600L685 500M615 750L680 800M29 965L50 980M35 755L50 780M110 760L190 815M400 645L460 655M345 605L385 630 400 645M270 710H288M430 750L400 780M440 655L480 630"/>
</g>

<g class="dots">
<circle cx="3115.600" cy="1130" r="9"/><circle cx="3059.400" cy="1577.600" r="10.500"/><circle cx="2891.400" cy="1692" r="9"/><circle cx="3024" cy="1856" r="9"/><circle cx="3541.500" cy="1822" r="11.500"/><circle cx="3541.500" cy="1822" r="5"/><circle cx="3703" cy="1607.600" r="9"/><circle cx="2640" cy="2063" r="9"/><circle cx="3396" cy="2091" r="9"/><circle cx="2632" cy="2180" r="10.500"/><circle cx="2650" cy="2227.600" r="9"/><circle cx="3589" cy="2157" r="9"/><circle cx="3684.500" cy="2370" r="10.500"/><circle cx="2874.500" cy="2365" r="9"/><circle cx="2514.600" cy="2475" r="9"/><circle cx="2521" cy="2580.600" r="9"/><circle cx="3213" cy="2507" r="9"/><circle cx="2944.500" cy="2655" r="9"/><circle cx="3282" cy="2790" r="10.500"/><circle cx="3491" cy="2861" r="9"/><circle cx="2855" cy="2951" r="9"/><circle cx="2701" cy="3040" r="9"/>
</g>
<g class="city">
<text x="3126" y="1160" textLength="130" class="dim">Odense</text><text x="2886" y="1570" textLength="162">Hamburg</text><text x="2902" y="1685" textLength="134">Bremen</text><text x="3034" y="1850" textLength="167">Hannover</text><text x="3555" y="1812" textLength="136" class="capital">Berlin</text><text x="2648" y="2094" textLength="104">Essen</text><text x="3404" y="2122" textLength="129">Leipzig</text><text x="2542" y="2172" textLength="76">Köln</text><text x="2550" y="2252" textLength="89">Bonn</text><text x="3597" y="2187" textLength="139">Dresden</text><text x="3593" y="2361" textLength="80">Prag</text><text x="2538" y="2389" textLength="326">Frankfurt am Main</text><text x="2524" y="2468" textLength="198">Luxemburg</text><text x="2530" y="2573.500" textLength="85" class="dim">Metz</text><text x="3221" y="2538" textLength="169">Nürnberg</text><text x="2768" y="2684" textLength="166">Stuttgart</text><text x="3293" y="2781" textLength="163">München</text><text x="3324" y="2886" textLength="157" class="dim">Salzburg</text><text x="2730" y="2945" textLength="115">Zürich</text><text x="2711" y="3033" textLength="81" class="dim">Bern</text>
</g>
<g class="country">
<text x="2510" y="1785" textLength="120">ANDE</text><text x="2864" y="2264" textLength="382" class="big">DEUTSCHLAND</text><text x="3643" y="2439" letter-spacing="6">TSCHECHISCHE</text><text x="3704" y="2478" letter-spacing="6">REP.</text><text x="3606" y="2909" letter-spacing="6">ÖSTERREICH</text><text x="2734" y="3100" letter-spacing="6.500">SCHWEIZ</text>
</g>
<circle cx="2846.500" cy="1364" r="22" fill="#fff" opacity=".6"/><circle cx="2846.500" cy="1364" r="20.500" fill="#3fae49"/>
<path fill="#fff" d="M2846.500 1349L2853 1358H2850.500L2855 1365H2852L2857 1372H2848.500V1375H2854V1377.500H2839V1375H2844.500V1372H2836L2841 1365H2838L2842.500 1358H2840Z"/>
<g class="park"><text x="2846.500" y="1415" textLength="192">Nationalpark</text><text x="2846.500" y="1445" textLength="164">Schleswig-</text><text x="2846.500" y="1476.500" textLength="220">Holsteinisches</text><text x="2846.500" y="1507" textLength="181">Wattenmeer</text></g>
<path fill="#4e5153" transform="translate(2536 3115)" d="M22 0Q22.500 8 15.500 9.500Q15 3 22 0ZM15.500 11.500C18 11.500 20 9.500 23.500 9.500Q28 10 30 13Q25 16 25.500 21.500Q26 27 31 29Q27 37.500 23 37.500C20 37.500 19 36 16 36S12 37.500 9.500 37.500C4 37 0 28 0 22.500C0 14 5 9.800 9.500 9.800C12 9.800 14 11.500 15.500 11.500Z"/>
<text x="2571" y="3153" textLength="144" class="karten">Karten</text>
<text x="3349" y="3146" textLength="320" class="legal">Rechtl. Informationen</text><path d="M3349 3152H3669" stroke="#767471" stroke-width="3"/>
</svg>
          <button class="start">Starten</button>
        </div>
        <div class="tabs">
          <nav><a><svg><use href="#i-clock"/></svg>Letzte Läufe</a><a class="on"><svg><use href="#i-plus"/></svg>Neuer Lauf</a><a><svg><use href="#i-flag"/></svg>Ziele</a><a><svg><use href="#i-hat"/></svg>Erfolge</a></nav>
          <div class="home"></div>
        </div>
        <div class="notch"><i class="speaker"></i><i class="camera"></i></div>
      </div></div>
    </div>
  </section>
</main>
<script src="roads.js"></script>
</body>
</html>
```
FILE: roads.js
```js
// Fills the map with a fine, deterministic network of minor roads.
(function () {
  var seed = 7;
  function rnd() { seed = (seed * 16807) % 2147483647; return seed / 2147483647; }
  var step = 37, cols = 34, rows = 48, pts = [], d = '';
  for (var r = 0; r < rows; r++) {
    pts.push([]);
    for (var c = 0; c < cols; c++) {
      pts[r].push([2490 + c * step + (rnd() - 0.5) * 30, 1240 + r * step + (rnd() - 0.5) * 30]);
    }
  }
  function link(a, b) {
    var x = (a[0] + b[0]) / 2 + (rnd() - 0.5) * 9, y = (a[1] + b[1]) / 2 + (rnd() - 0.5) * 9;
    d += 'M' + a[0].toFixed(1) + ' ' + a[1].toFixed(1) + 'L' + x.toFixed(1) + ' ' + y.toFixed(1) + ' ' + b[0].toFixed(1) + ' ' + b[1].toFixed(1);
  }
  for (r = 0; r < rows - 1; r++) {
    for (c = 0; c < cols - 1; c++) {
      if (rnd() < 0.74) link(pts[r][c], pts[r][c + 1]);
      if (rnd() < 0.74) link(pts[r][c], pts[r + 1][c]);
      if (rnd() < 0.1) link(pts[r][c], pts[r + 1][c + 1]);
    }
  }
  document.getElementById('minor').setAttribute('d', d);
})();
```
FILE: styles.css
```css
/* 1rem = 10 design units on a 4500-unit board */
html { font-size: 9.1022px; }
* { box-sizing: border-box; margin: 0; padding: 0; }
body { width: 450rem; height: 450rem; background: #fff; color: #000; font-family: Inter, "Liberation Sans", sans-serif; overflow: hidden; }
.defs { position: absolute; }
.board { display: flex; gap: 37.7rem; padding: 47.5rem 0 0 70.25rem; }
.col { width: 135.5rem; flex: none; }
.second { padding-top: 28.7rem; }

.ln, .ln3, .ln9 { fill: none; stroke: currentColor; stroke-width: 4.6; stroke-linecap: round; stroke-linejoin: round; }
.ln3 { stroke-width: 13; }
.ln9 { stroke-width: 9.5; }
.fl { fill: currentColor; }

.brand { display: flex; align-items: center; gap: 15.7rem; height: 46.6rem; margin-bottom: 30.5rem; }
.app-icon { width: 46.6rem; height: 46.6rem; flex: none; border-radius: 15rem;
  background: radial-gradient(ellipse 50% 32% at 47% 66%, rgba(50, 80, 115, .5), rgba(50, 80, 115, .32) 45%, rgba(40, 70, 110, 0)), linear-gradient(197deg, #0054a5 5%, #003b78 50%, #001a40 100%); }
.icon-name { font: 800 122.5px Inter, sans-serif; fill: #fff; }
h1 { width: 73.2rem; overflow: hidden; white-space: nowrap; font-size: 28.3rem; line-height: 1.21; font-weight: 800; letter-spacing: .05rem; }

.phone { position: relative; width: 134.4rem; height: 275.5rem; margin-left: .3rem; border: .4rem solid #000; border-radius: 21.5rem; background: #fff; padding: .75rem; box-shadow: 0 .6rem 6rem rgba(60, 60, 160, .13); }
.rim { height: 100%; border: 1.1rem solid #8d8f8e; border-radius: 20.4rem; background: #000; padding: 4.4rem; }
.band { position: absolute; background: #dcdcd6; }
.band.tr { left: 105.1rem; top: 0; width: 2.1rem; height: 1.9rem; }
.band.bl { left: 26.6rem; bottom: 0; width: 2.1rem; height: 1.9rem; }
.band.lt, .band.lb { left: 0; width: 1.85rem; height: 2.1rem; }
.band.rt, .band.rb { right: 0; width: 1.85rem; height: 2.1rem; }
.band.lt, .band.rt { top: 27.7rem; }
.band.lb, .band.rb { top: 245.2rem; }
.screen { position: relative; display: flex; flex-direction: column; height: 100%; border-radius: 16.5rem; overflow: hidden; background: #f0f0f6; }

.bars { height: 28.75rem; flex: none; background: #fbfbfd; border-bottom: .2rem solid #bcbcc0; }
.status { display: flex; align-items: center; height: 15.4rem; padding: 0 4.6rem 0 5.9rem; }
.time { font-size: 4.8rem; font-weight: 600; letter-spacing: .02rem; }
.loc { width: 3.4rem; height: 3.4rem; margin: 0 auto 0 1.2rem; }
.plane { width: 4.4rem; height: 4rem; margin-right: 2rem; }
.battery { width: 7.8rem; height: 3.8rem; }
.nav { display: grid; grid-template-columns: 1fr auto 1fr; align-items: center; height: 12.4rem; padding: 0 5.4rem 0 2.6rem; font-size: 5.3rem; }
.nav b { font-weight: 600; letter-spacing: .02rem; transform: translateX(-1.4rem); position: relative; left: 2.6rem; }
.back { display: flex; align-items: center; gap: 2.6rem; color: #007aff; }
.back svg { width: 3.8rem; height: 6.4rem; }
.share { justify-self: end; width: 6.4rem; height: 8rem; color: #007aff; }
.gear { justify-self: end; width: 8rem; height: 8rem; color: #007aff; }
.content { flex: 1; }

.hero { margin-top: 11.2rem; height: 42.5rem; background: #fff; border: solid #c9c9cd; border-width: .2rem 0; padding: 4rem 6.3rem; }
.hero strong { display: block; font-size: 15.6rem; line-height: 18.4rem; font-weight: 800; letter-spacing: .22rem; }
.hero p { margin-top: 6.4rem; font-size: 5.25rem; line-height: 6.4rem; letter-spacing: .02rem; }
h2 { height: 16.2rem; padding: 9.6rem 0 0 5.1rem; font-size: 3.85rem; line-height: 4.6rem; font-weight: 400; color: #6d6d72; }
ul { list-style: none; background: #fff; border: solid #c9c9cd; border-width: .2rem 0; padding-left: 5.1rem; }
li { display: flex; align-items: center; height: 14.05rem; padding-right: 5.1rem; border-bottom: .2rem solid #d4d4d8; font-size: 5.25rem; letter-spacing: -.03rem; }
li:last-child { border-bottom: 0; }
li svg { width: 9rem; height: 9rem; margin-right: 2.75rem; }
li em { margin-left: auto; font-style: normal; }
li .next { width: 2rem; height: 3.6rem; margin: 0 .3rem 0 3.4rem; color: #c0c0c4; }
.blue { color: #007aff; }
.red { color: #ff3b30; }
.green { color: #34c759; }

.tabs { height: 26.1rem; flex: none; background: #fbfbfd; border-top: .2rem solid #b6b6ba; padding-top: 2.55rem; }
.tabs nav { display: grid; grid-template-columns: repeat(4, 1fr); height: 20rem; }
.tabs a { display: flex; flex-direction: column; align-items: center; color: #98989a; font-size: 3.15rem; line-height: 3.8rem; font-weight: 500; letter-spacing: .09rem; }
.tabs a svg { width: 10rem; height: 9rem; margin-bottom: .1rem; }
.tabs .on { color: #007aff; }
.home { width: 43.4rem; height: 1.7rem; margin: 0 auto; border-radius: 1rem; background: #000; }

.notch { position: absolute; left: 27.8rem; top: -.1rem; width: 65.5rem; height: 10.1rem; background: #000; border-radius: 0 0 6.6rem 6.6rem; }
.notch::before, .notch::after { content: ""; position: absolute; top: 0; width: 2rem; height: 2.2rem; }
.notch::before { right: 100%; background: radial-gradient(circle at 0 100%, transparent 1.95rem, #000 2rem); }
.notch::after { left: 100%; background: radial-gradient(circle at 100% 100%, transparent 1.95rem, #000 2rem); }
.speaker { position: absolute; left: 25.8rem; top: 2.1rem; width: 14.4rem; height: 2.6rem; border-radius: 1.3rem; background: #121212; }
.camera { position: absolute; left: 43.9rem; top: .8rem; width: 5.1rem; height: 5.1rem; border-radius: 50%; background: radial-gradient(circle, #24408c 0 .25rem, #101c40 .5rem .85rem, #000 1rem 1.25rem, #191919 1.3rem); }

.map-screen .bars { height: 28.65rem; background: linear-gradient(90deg, #f3feff, #f6feff 20%, #fcfaf8 38%, #f6feff 55%, #f7fdfe 72%, #fcfaf8 90%); }
.map-screen .tabs { height: 26.6rem; background: radial-gradient(circle at 85% 90%, #f4feff, #fdfaf6 30%, #fdfbf7); border-color: #bbb9b5; }
.map-screen .tabs a:not(.on) { color: #9b9a95; }
.map-screen .nav { padding-right: 5.5rem; }
.map { position: relative; background: #f9f4ec; min-height: 0; }
.map > svg { display: block; width: 100%; height: 100%; }
.start { position: absolute; left: 34.7rem; bottom: 7.6rem; width: 51.7rem; height: 17.5rem; border: 0; border-radius: 8rem; background: #007aff; color: #fff; font: 400 5.3rem Inter, sans-serif; letter-spacing: .02rem; }

.land { fill: #f9f4ec; }
.water { fill: #aee1f6; }
.g1 { fill: #d7e9cd; }
.g2 { fill: #e1f0da; }
.minor, .road, .glow, .dash { fill: none; stroke-linejoin: round; vector-effect: non-scaling-stroke; }
.minor { stroke: #cfcfcc; stroke-width: 1px; }
.road { stroke: #ffbf4f; stroke-width: 2.7px; }
.glow { stroke: #f6b9b0; stroke-opacity: .42; stroke-width: 20px; }
.dash { stroke: #dd9d96; stroke-width: 2.4px; stroke-dasharray: 26 9; }
.dots circle { fill: #fff; stroke: #5c5a57; stroke-width: 3.4; }
.city, .country, .park, .karten { font-family: Inter, sans-serif; paint-order: stroke; stroke: rgba(255, 252, 247, .85); stroke-width: 5px; stroke-linejoin: round; }
.city { font-size: 33px; font-weight: 550; fill: #454341; }
.city .dim { fill: #72706d; }
.city .capital { font-size: 41px; font-weight: 600; }
.country { font-size: 34.5px; font-weight: 750; fill: #555; }
.country .big { font-size: 40px; }
.park { font-size: 29.5px; font-weight: 600; fill: #2e8f35; text-anchor: middle; }
.karten { font-size: 48px; font-weight: 500; fill: #55585a; stroke-width: 2px; }
.legal { font: 500 29px Inter, sans-serif; fill: #767471; }
```
